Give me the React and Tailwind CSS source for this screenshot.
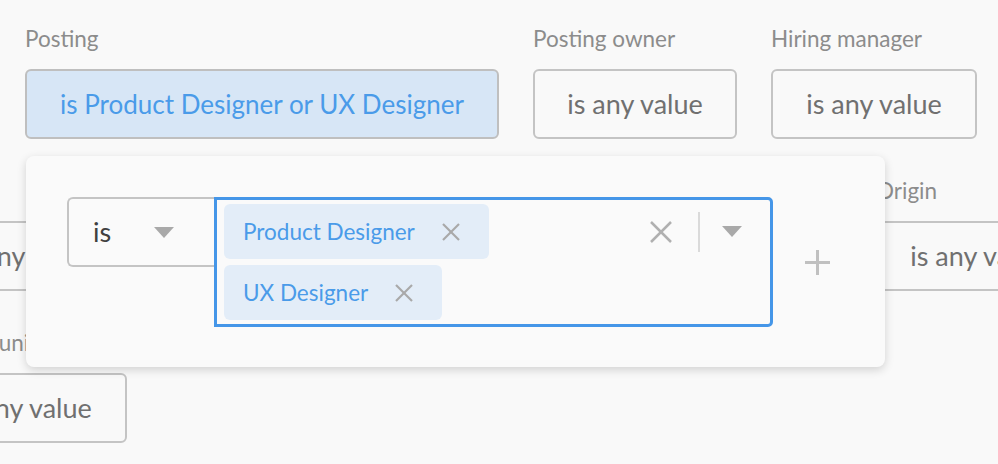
import React from 'react'

function Caret({ className = '' }) {
  return (
    <svg width="20" height="11" viewBox="0 0 20 11" className={className}>
      <polygon points="0,0 20,0 10,11" fill="#a9a9a9" />
    </svg>
  )
}

function Cross({ size, stroke, color, className = '' }) {
  return (
    <svg width={size} height={size} viewBox={`0 0 ${size} ${size}`} className={className}>
      <line x1="1" y1="1" x2={size - 1} y2={size - 1} stroke={color} strokeWidth={stroke} />
      <line x1={size - 1} y1="1" x2="1" y2={size - 1} stroke={color} strokeWidth={stroke} />
    </svg>
  )
}

function Plus({ className = '' }) {
  return (
    <svg width="25" height="25" viewBox="0 0 25 25" className={className}>
      <line x1="12.5" y1="0" x2="12.5" y2="25" stroke="#c0c0c0" strokeWidth="3" />
      <line x1="0" y1="12.5" x2="25" y2="12.5" stroke="#c0c0c0" strokeWidth="3" />
    </svg>
  )
}

function Field({ label, value = 'is any value', width, labelClass = '', active = false }) {
  return (
    <div className={`flex flex-none flex-col ${width}`}>
      <span className={`mb-[17px] whitespace-nowrap text-[22.5px] leading-[26px] text-[#8c8c8c] ${labelClass}`}>{label}</span>
      <div
        className={
          active
            ? 'flex h-[70px] items-center justify-center whitespace-nowrap rounded-[6px] border-2 border-[#bfbfbf] bg-[#d7e6f6] text-[26px] text-[#4a9be9]'
            : 'flex h-[70px] items-center justify-center whitespace-nowrap rounded-[6px] border-2 border-[#c4c4c4] text-[27px] text-[#707070]'
        }
      >
        {value}
      </div>
    </div>
  )
}

function Chip({ children }) {
  return (
    <div className="flex h-[55px] items-center rounded-[6px] bg-[#e3edf8] pl-[19px] pr-[29px]">
      <span className="whitespace-nowrap text-[22.5px] text-[#4a9be9]">{children}</span>
      <Cross size={18} stroke={2.2} color="#a9a9a9" className="ml-[27px]" />
    </div>
  )
}

export default function App() {
  return (
    <div className="relative h-[464px] w-[998px] overflow-hidden bg-[#f9f9f9] font-['Lato','Noto_Sans',sans-serif]">
      <div className="flex flex-col gap-[39px] pt-[26px]">
        <div className="flex gap-[34px] pl-[25px]">
          <Field label="Posting" value="is Product Designer or UX Designer" width="w-[474px]" active />
          <Field label="Posting owner" width="w-[204px]" />
          <Field label="Hiring manager" width="w-[206px]" />
        </div>
        <div className="ml-[-76px] flex gap-[34px]">
          <Field label="Team" width="w-[204px]" />
          <Field label="Location" width="w-[204px]" />
          <Field label="Department" width="w-[442px]" />
          <Field label="Origin" width="w-[204px]" />
        </div>
        <div className="ml-[-79px] flex gap-[34px]">
          <Field label="Business unit" width="w-[206px]" labelClass="ml-[-14px]" />
        </div>
      </div>

      {/* filter popover for Posting */}
      <div className="absolute left-[26px] top-[156px] flex w-[859px] items-start rounded-[8px] bg-[#fafafa] pb-[40px] pl-[41px] pt-[41px] shadow-[0_3px_10px_rgba(0,0,0,0.16)]">
        <div className="flex h-[70px] w-[147px] flex-none items-center rounded-l-[6px] border-2 border-r-0 border-[#c4c4c4] pl-[24px] text-[27px] text-[#404040]">
          <span>is</span>
          <Caret className="ml-[43px]" />
        </div>
        <div className="flex h-[130px] w-[559px] flex-none rounded-r-[5px] border-[3px] border-[#4596e8]">
          <div className="flex min-w-0 flex-1 flex-wrap content-start gap-[6px] pl-[7px] pt-[4px]">
            <Chip>Product Designer</Chip>
            <Chip>UX Designer</Chip>
          </div>
          <div className="mt-[4px] flex h-[55px] flex-none items-center pr-[28px]">
            <Cross size={22} stroke={2.5} color="#b0b0b0" />
            <div className="ml-[26px] h-[40px] w-[2px] bg-[#dadada]" />
            <Caret className="ml-[22px]" />
          </div>
        </div>
        <Plus className="ml-[32px] self-center" />
      </div>
    </div>
  )
}
